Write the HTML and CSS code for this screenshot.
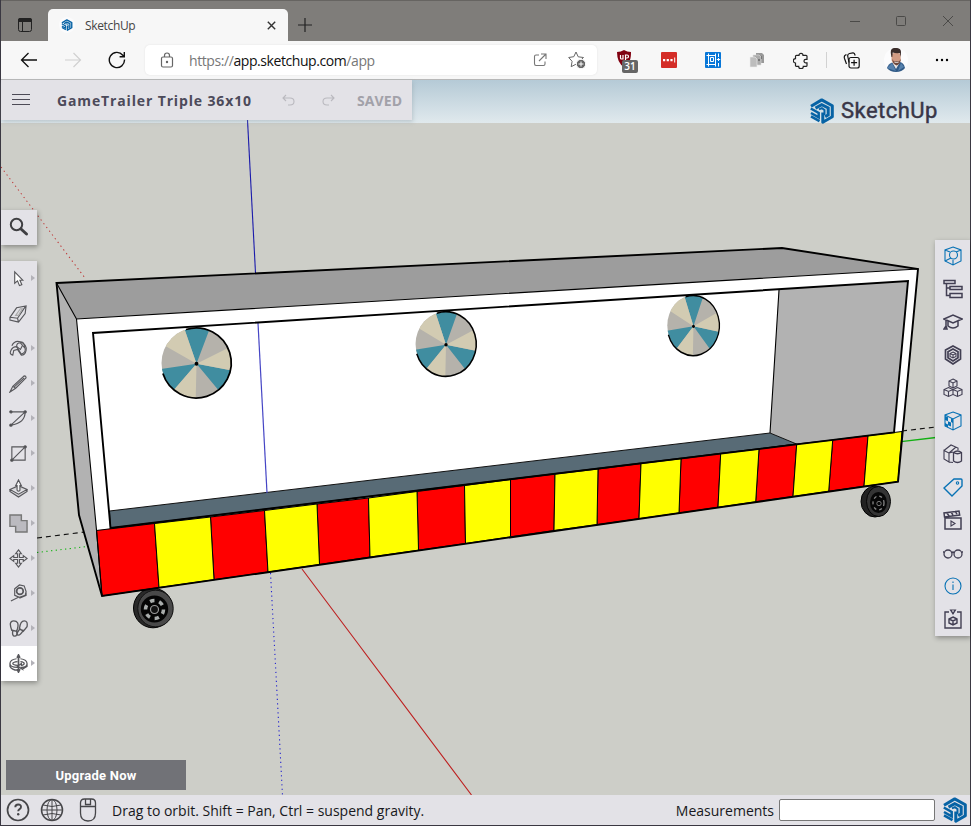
FILE: index.html
```html
<!DOCTYPE html>
<html lang="en">
<head>
<meta charset="utf-8">
<title>SketchUp</title>
<link rel="stylesheet" href="styles.css">
</head>
<body>
<svg width="0" height="0" class="defs">
  <defs>
    <symbol id="logo" viewBox="0 0 24 26">
      <g fill="none" stroke="#0763a5" stroke-width="3">
        <path d="M1 8.200 11.700 1.900 22.300 7.800V18.700L12.800 24.300V14.600" stroke-linejoin="round"/>
        <path d="M5.500 10.100 11.700 6.600 18.200 10V16.900L15.200 18.700" />
        <path d="M9 11.400 11.900 10.200 14.500 12V17" stroke-width="2"/>
        <path d="M.8 10.500 8.700 15V19.400L1 15M1 18.400 9.500 23.200" stroke-width="2.500"/>
      </g>
    </symbol>
    <clipPath id="disc"><circle r="1" cx="0" cy="-.025"/></clipPath>
    <symbol id="umbrella" viewBox="-1.1 -1.1 2.2 2.2" overflow="visible" preserveAspectRatio="none">
      <g clip-path="url(#disc)">
        <rect x="-1.1" y="-1.1" width="2.2" height="2.2" fill="#b5b2ab"/>
        <path fill="#408da0" d="M0 0-.45-1.3H.49ZM0 0 1.34.25.84 1.01ZM0 0-.9 1.04-1.4.21Z"/>
        <path fill="#d2cbb2" d="M0 0 1.19-.6 1.34.25ZM0 0-.03 1.33-.9 1.04ZM0 0-1.22-.7-.45-1.3Z"/>
      </g>
      <path d="M-.3-.98A1 1 0 1 1-.96.28" fill="none" stroke="#000" stroke-width=".05"/>
      <circle r=".055"/>
    </symbol>
  </defs>
</svg>
<div class="window">
  <header class="titlebar">
    <svg class="tabs-icon" width="16" height="16" viewBox="0 0 16 16"><rect x="1.500" y="1.500" width="13" height="13" rx="2" fill="none" stroke="#222"/><path d="M1 5V3q0-2 2-2h10q2 0 2 2v2z" fill="#222"/><path d="M5.500 5v9" stroke="#222"/></svg>
    <div class="tab">
      <svg width="16" height="16" viewBox="0 0 16 16"><circle cx="8" cy="8" r="8" fill="#fbfbfc"/><use href="#logo" x="2" y="2" width="12" height="12"/></svg>
      <span>SketchUp</span>
      <svg class="tab-close" width="9" height="9" viewBox="0 0 9 9"><path d="m.8.8 7.400 7.400m0-7.400L.8 8.200" stroke="#333" stroke-width="1.400"/></svg>
    </div>
    <svg class="new-tab" width="14" height="14" viewBox="0 0 14 14"><path d="M7 0v14M0 7h14" stroke="#222" stroke-width="1.200"/></svg>
    <div class="controls">
      <svg width="10" height="12" viewBox="0 0 10 12"><path d="M0 6.500h10" stroke="#4b4a48"/></svg>
      <svg width="12" height="12" viewBox="0 0 12 12"><rect x="1.500" y="1.500" width="9" height="9" rx="1" fill="none" stroke="#4b4a48"/></svg>
      <svg width="12" height="12" viewBox="0 0 12 12"><path d="m1 1 10 10M11 1 1 11" stroke="#4b4a48"/></svg>
    </div>
  </header>
  <div class="navbar">
    <svg class="back" width="18" height="16" viewBox="0 0 18 16" fill="none" stroke="#111" stroke-width="1.300"><path d="M17 8H1.500M8.500 1l-7 7 7 7"/></svg>
    <svg class="forward" width="18" height="16" viewBox="0 0 18 16" fill="none" stroke="#d0d0d0" stroke-width="1.200"><path d="M1 8h15.500M9.500 1l7 7-7 7"/></svg>
    <svg class="reload" width="18" height="18" viewBox="0 0 18 18" fill="none" stroke="#111" stroke-width="1.400"><path d="M16.500 8.500a7.600 7.600 0 1 1-1.700-4.300l1 1.200M16.300 1v4.700h-4.700"/></svg>
    <div class="address">
      <svg width="14" height="16" viewBox="0 0 14 16" fill="none" stroke="#666" stroke-width="1.200"><rect x="1.500" y="5" width="11" height="10" rx="1.500"/><path d="M4.500 5V3.500q0-2.500 2.500-2.500t2.500 2.500V5"/><circle cx="7" cy="10" r=".6" fill="#666"/></svg>
      <span class="url">https://<b>app.sketchup.com</b>/app</span>
      <svg class="open" width="14" height="14" viewBox="0 0 14 14" fill="none" stroke="#777" stroke-width="1.100"><path d="M6 2H3q-1.500 0-1.500 1.500v7Q1.500 12.500 3 12.500h7.500q1.500 0 1.500-1.500V8.500M8 1h5v5M13 1 6 8"/></svg>
      <svg class="star" width="18" height="18" viewBox="0 0 18 18"><path d="m8 1 2.200 4.800 5.300.7-3.900 3.700.2 5.600L8 13.200l-4.800 2.500.9-5.400L.7 6.500l5.100-.8z" fill="none" stroke="#666"/><circle cx="13" cy="13" r="4.700" fill="#666" stroke="#fff"/><path d="M13 10.500v5M10.500 13h5" stroke="#fff"/></svg>
    </div>
    <div class="extensions">
      <div class="shield"><svg width="14" height="17" viewBox="0 0 14 17"><path d="M7 0q3 2 7 2c0 7-1 11-7 15Q0 13 0 2q4 0 7-2" fill="#800010"/><path d="M3.500 5v3q0 1 1 1H6V5M8.500 10V5H10q1.500 0 1.500 1.500T10 8H8.500" fill="none" stroke="#fff" stroke-width="1.200"/></svg><span>31</span></div>
      <svg width="16" height="16" viewBox="0 0 16 16"><rect width="16" height="16" rx="1" fill="#d42d27"/><path d="M2 7h2.200v2.200H2zm3.700 0h2.200v2.200H5.700zm3.700 0h2.200v2.200H9.400zM13.200 5.500h1v5h-1z" fill="#fff"/></svg>
      <svg width="16" height="16" viewBox="0 0 16 16"><rect width="16" height="16" rx="1" fill="#0877d8"/><path d="M1.500 3.500h9M3.500 1.500v13M1.500 12.500h9M10.500 1.500v13M5.500 5.500h3v4h-3zM13.500 1.500V5m0 6v3.500m-1.700-7h3.400M13.500 6v3" fill="none" stroke="#fff"/></svg>
      <svg width="16" height="16" viewBox="0 0 16 16"><path d="M7 1h6l2 2v8H7z" fill="#999"/><path d="M4 3h6l2 2v8H4z" fill="#aaa" stroke="#ddd" stroke-width=".6"/><path d="M1 5h5l2 2v8H1z" fill="#bdbdbd" stroke="#eee" stroke-width=".6"/><path d="M9 7h2v2H9zM12 4h1v3h-1z" fill="#777"/></svg>
      <svg width="16" height="17" viewBox="0 0 16 17"><path d="M6 3.300a2 2 0 0 1 4 0h3q1 0 1 1v3h-1.200a1.800 1.800 0 0 0 0 3.600H14v2.500q0 1-1 1h-2.700a2.300 2.300 0 0 1-4.600 0H3.500q-1 0-1-1V11a2.200 2.200 0 0 1 0-4.400V4.300q0-1 1-1z" fill="none" stroke="#222" stroke-width="1.200"/></svg>
      <i class="divider"></i>
      <svg width="17" height="17" viewBox="0 0 17 17" fill="none" stroke="#111" stroke-width="1.200"><path d="m3.500 12-2-5.500Q.7 4 2.500 3l1-.4M6 10.500l-1.200-6Q4.300 2 6.500 1.500L10 .8q1.500-.2 2.200 2.700"/><rect x="6" y="5.500" width="10.200" height="10.500" rx="2"/><path d="M11.100 7.700v6M8.100 10.700h6"/></svg>
      <svg class="avatar" width="24" height="24" viewBox="0 0 24 24"><circle cx="12" cy="12" r="12" fill="#fcfcfd"/><path d="M3 20q1-4 6-6h7q4 1 5 6-3 4-9 4t-9-4" fill="#315a86"/><path d="m8 14 4 7 4-7z" fill="#ece7e4"/><path d="m3 20 5-5 4 8zM17 15l-3 8 6-4z" fill="#5681ad"/><path d="M7.500 6q4.500-3 9 0l.3 6q-.5 3-4.300 5-4-1-5-5z" fill="#d29b83"/><path d="M7.500 9Q5-.5 11 0q6-.5 6 4l-.3 5-1-4q-4 .5-7-.5L8.300 9z" fill="#3b2d2b"/><path d="M8.200 11 10 13.500q3-1.200 5 0L16.800 11q-.3 5-4.200 6.500-4-1.500-4.400-6.500" fill="#6d493e"/><path d="M10.500 14.300h4" stroke="#eee" stroke-width=".9"/></svg>
      <svg width="16" height="4" viewBox="0 0 16 4"><circle cx="3" cy="2" r="1.200"/><circle cx="8" cy="2" r="1.200"/><circle cx="13" cy="2" r="1.200"/></svg>
    </div>
  </div>

  <main class="viewport">
    <svg class="scene" width="969" height="715" viewBox="1 80 969 715">
      <g fill="none" stroke-width="1.100">
        <path d="M247.500 120 255.500 273" stroke="#1a1aab"/>
        <path d="M1 167 85 278" stroke="#bf3a3a" stroke-dasharray="1.300 3.400"/>
        <path d="M302 569 471.500 795" stroke="#bd1d1d"/>
        <path d="M270.500 573 282.500 795" stroke="#2222d0" stroke-dasharray="1.200 3.300"/>
        <path d="M37 538 97 530.500M902 431 936 427" stroke="#111" stroke-dasharray="5 4"/>
        <path d="M37 552.500 87 546.500" stroke="#16b416" stroke-dasharray="1.300 3.400"/>
        <path d="M901 441.700 936 437.500" stroke="#12b012" stroke-width="1.300"/>
      </g>
      <g>
        <ellipse cx="153" cy="608" rx="19.500" ry="19.800" fill="#292929" stroke="#000"/>
        <ellipse cx="155.500" cy="608.500" rx="17.700" ry="18.300" fill="#494949" stroke="#111"/>
        <ellipse cx="154.500" cy="609" rx="13.700" ry="13.500" fill="#050505"/>
        <circle cx="154.500" cy="609.500" r="9" fill="none" stroke="#a9adac" stroke-width="3.500" stroke-dasharray="4.500 4.900"/>
        <circle cx="154.500" cy="609.500" r="4" fill="#111" stroke="#999" stroke-width="1.200"/>
        <ellipse cx="875" cy="501.500" rx="14" ry="15.500" fill="#222" stroke="#000"/>
        <ellipse cx="878.500" cy="501.500" rx="12" ry="15" fill="#343434" stroke="#050505"/>
        <ellipse cx="878.500" cy="502.500" rx="8.500" ry="10.500" fill="#070707"/>
        <ellipse cx="878.500" cy="503" rx="5.500" ry="7" fill="none" stroke="#888" stroke-width="1.300" stroke-dasharray="3 3"/>
        <circle cx="879" cy="503.500" r="2.200" fill="none" stroke="#777"/>
      </g>
      <path d="M56.500 283 782 248 918 269 76.500 319z" fill="#9d9d9d"/>
      <path d="M56.500 283 76.500 319 96.500 530 102 596 79 515z" fill="#b2b2b2"/>
      <path d="M76.500 319 918 269 902 432 96.500 530z" fill="#fff"/>
      <path d="M779 289.500 908 281 894 433 796.500 444 770 433z" fill="#b2b2b2"/>
      <path d="M109.500 511 770 433 796.500 444 110.500 528z" fill="#586b76" stroke="#111"/>
      <path d="M258 323 267 493" stroke="#4545c5" stroke-width="1.200"/>
      <g stroke="#000" stroke-width="1">
        <g fill="red">
          <path d="M96.500 530.500 154.500 523.500 159 587.500 102 596z"/><path d="M210.500 517 264.500 510.500 268 572 214 579.700z"/><path d="M317 504 368.500 498 370 557 319.500 564.500z"/><path d="M417 491.500 464.500 485.500 465.500 543.500 418.500 550.200z"/><path d="M510.500 479.500 555 474 554 530.500 510.500 536.800z"/><path d="M598 469 641 463.500 639 518.700 597 524.700z"/><path d="M681 458.700 720.700 453.500 718 507.300 679 513z"/><path d="M759 449 796.700 444 793 496.500 755.700 501.800z"/><path d="M832.700 440 868 435.700 864 486.300 828.700 491.300z"/>
        </g>
        <g fill="#ff0">
          <path d="M154.500 523.500 210.500 517 214 579.700 159 587.500z"/><path d="M264.500 510.500 317 504 319.500 564.500 268 572z"/><path d="M368.500 498 417 491.500 418.500 550.200 370 557z"/><path d="M464.500 485.500 510.500 479.500 510.500 536.800 465.500 543.500z"/><path d="M555 474 598 469 597 524.700 554 530.500z"/><path d="M641 463.500 681 458.700 679 513 639 518.700z"/><path d="M720.700 453.500 759 449 755.700 501.800 718 507.300z"/><path d="M796.700 444 832.700 440 828.700 491.300 793 496.500z"/><path d="M868 435.700 902 431.500 898 481.700 864 486.300z"/>
        </g>
      </g>
      <g fill="none" stroke="#000">
        <path d="M56.500 283 76.500 319 918 269M76.500 319 96.500 530 102 596M779 290 770 433" stroke-width="1.100"/>
        <path d="M56.500 283 782 248 918 269 898 481.700 102 596 79 515zM110.500 528 93 333 908 281 894 432.500z" stroke-width="1.900"/>
      </g>
      <use href="#umbrella" x="158" y="325.300" width="77" height="77"/>
      <use href="#umbrella" x="412.500" y="309.300" width="67" height="71"/>
      <use href="#umbrella" x="664.700" y="293.300" width="57.500" height="66"/>
    </svg>

    <div class="docbar">
      <svg width="18" height="12" viewBox="0 0 18 12"><path d="M0 .5h18M0 5.500h18M0 10.500h18" stroke="#4c4a56"/></svg>
      <strong class="doc-name">GameTrailer Triple 36x10</strong>
      <svg class="undo" width="13" height="13" viewBox="0 0 13 13"><path d="M4 1 1 4l3 3M1 4h7q4 0 4 3.500T8 11H6" fill="none" stroke="#bab9bf" stroke-width="1.100"/></svg>
      <svg class="redo" width="13" height="13" viewBox="0 0 13 13"><path d="m9 1 3 3-3 3M12 4H5Q1 4 1 7.500T5 11h2" fill="none" stroke="#bab9bf" stroke-width="1.100"/></svg>
      <strong class="saved">SAVED</strong>
    </div>
    <div class="brand"><svg width="24" height="26"><use href="#logo"/></svg><span>SketchUp</span></div>

    <div class="panel search"><svg width="20" height="20" viewBox="0 0 20 20" fill="none" stroke="#3f3f42"><circle cx="7.500" cy="7.500" r="5.700" stroke-width="2"/><path d="m12 12 5.500 5" stroke-width="3" stroke-linecap="round"/></svg></div>
    <div class="panel tools">
      <div class="tool more"><svg viewBox="0 0 20 20"><path d="M6 3v12l3-2.500 2 5 2.500-1-2-4.700h3z" fill="#fff"/></svg></div>
      <div class="tool"><svg viewBox="0 0 20 20"><path d="m1 14 7-10 10-2-1 8-7 9-9-2zM1 14l8 1 8-12M9 15l1 4"/><path d="m7 12 5-7h2l-4 7z" stroke="#aaa"/></svg></div>
      <div class="tool more"><svg viewBox="0 0 20 20"><path d="M3 7q3-6 9-4 7 3 6 9-1 5-5 5l-4-6-4 1-1 5q-4-1-2-5 2-4 6-4l4 3 2-4"/><path d="m8 8 5 8q5-2 4-6L12 4q-4 0-4 4M12 4q3-3 5 5" /></svg></div>
      <div class="tool more"><svg viewBox="0 0 20 20"><path d="m1 19 3-6L16 2q2 0 2 2L7 15zM4 13l3 2M5 14 16 4"/></svg></div>
      <div class="tool more"><svg viewBox="0 0 20 20"><path d="M2 3h15q0 12-15 14M2 17 17 3"/><circle cx="2" cy="3" r="1.200" fill="#444"/><circle cx="17" cy="3" r="1.200" fill="#444"/><circle cx="2" cy="17" r="1.200" fill="#444"/></svg></div>
      <div class="tool more"><svg viewBox="0 0 20 20"><path d="M3 3h14v14H3zM3 17 17 3"/><circle cx="3" cy="17" r="1.200" fill="#444"/><circle cx="17" cy="3" r="1.200" fill="#444"/></svg></div>
      <div class="tool more"><svg viewBox="0 0 20 20"><path d="m1 11 9-4 9 4-9 5zM1 11v2l9 6 9-6v-2" fill="#d2d1d5"/><path d="M8.500 12V7H7l3-6 3 6h-1.500v5q-1.500 1.500-3 0" fill="#f4f4f5"/></svg></div>
      <div class="tool more"><svg viewBox="0 0 20 20"><path d="M1 1h12v6h6v12H7v-6H1z" fill="#bbbac0" stroke="#777" stroke-width="1.500"/></svg></div>
      <div class="tool more"><svg viewBox="0 0 20 20"><path d="m10 1 3 4h-2v4h4V7l4 3-4 3v-2h-4v4h2l-3 4-3-4h2v-4H5v2l-4-3 4-3v2h4V5H7z"/></svg></div>
      <div class="tool more"><svg viewBox="0 0 20 20"><path d="m6 5 5-4 5 1 2 6-1 4-6 2-5-2zM7 12l3 2-8 4M18 9v3l-7 3"/><circle cx="11.500" cy="7.500" r="3.500" stroke-width="1.800"/></svg></div>
      <div class="tool more"><svg viewBox="0 0 20 20"><path d="M3 12Q-1 2 5 2t4 8l-1 3zm1 0q-1 6 2 6t2-5zM11 10q1-8 5-8t3 6l-4 5zm0 1-2 3q-1 3 1 3t5-5z" stroke-width="1.400"/></svg></div>
      <div class="tool more active"><svg viewBox="0 0 20 20"><path d="M8 5Q1 6 1 10t8 4v-2q-5-.5-5-2t5-2M12 5q7 1 7 5t-6 4l1 2-5-3 4-3v2q3-.5 3-2t-4-2M1 10v3q2 4 8 4M19 10v3l-5 3" stroke-width="1.300"/><path d="M10 1v18M8.500 4 10 1l1.500 3M8.500 16l1.500 3 1.500-3" stroke-width="1.800"/></svg></div>
    </div>
    <div class="panel side">
      <svg class="blue" viewBox="0 0 20 20"><path d="m10 1 8 3v11l-8 4-8-4V4zM2 4l5 2M13 6l5-2M10 14v5"/><circle cx="10.500" cy="9" r="4"/><path d="m8 12-6 3"/></svg>
      <svg viewBox="0 0 20 20"><path d="M1 1.500h11v3H1zM7 7.500h12v3H7zM7 14.500h12v4H7zM3.500 5v11.500H7M3.500 9H7" stroke-width="1.500"/></svg>
      <svg viewBox="0 0 20 20"><path d="m1 7 9-4 9 4-9 4zM5 9v5q5 4 10 0V9M3 8v7m-2 2 2-3 1 3z" stroke-width="1.500"/></svg>
      <svg viewBox="0 0 20 20"><path d="m10 1 7.500 4v9L10 19l-7.500-5V5zM10 4l5 2.700v6L10 16l-5-3.300v-6z" stroke-width="1.700"/><path d="m10 7 3 1.500v3L10 13l-3-1.500v-3zm-3 1.500 3 1.500 3-1.500M10 10v3"/></svg>
      <svg viewBox="0 0 20 20"><path d="m10 1 4 2v5l-4 2-4-2V3zM6 3l4 2 4-2M10 5v5M5.500 9.500l4.500 2v5l-4.500 2-4.500-2v-5zM1 11.500l4.500 2 4.500-2M5.500 13.500v5M14.500 9.500l4.500 2v5l-4.500 2-4.500-2v-5l4.500-2M10 11.500l4.500 2 4.500-2M14.500 13.500v5"/></svg>
      <svg class="blue" viewBox="0 0 20 20"><path d="m10 1 8 3v11l-8 4-8-4V4zM2 4l8 4 8-4M10 8v11"/><path d="m2 5 3 1.300v4L2 9zm3 5.300 3 1.300v4l-3-1.400zM8 7l2 1v4l-2-1zM2 12l3 1.500v3L2 15z" fill="#0872b5" stroke="none"/></svg>
      <svg viewBox="0 0 20 20"><path d="M1 6.500 8 1l7 3v2M1 6.500 6 9v9l-5-3zM6 9l7-6M6 18l4 .5M6 9l4-1"/><path d="M10.500 8.500V17q4 3 8 0V8.500q-4-3-8 0 4 2.500 8 0" stroke-width="1.300"/></svg>
      <svg class="blue" viewBox="0 0 20 20"><path d="M11 2h7q1 0 1 1v6L9 19l-8-8z" stroke-width="1.400"/><circle cx="14.500" cy="6" r="1.200"/></svg>
      <svg viewBox="0 0 20 20"><path d="M2 8h16v11H2zM1.500 7 1 3l15-2 .7 4zM4 3l2 3m2-4 2 3m2-4 2 3" stroke-width="1.500"/><path d="m8 11 4 2.500L8 16z"/></svg>
      <svg viewBox="0 0 20 20"><circle cx="5" cy="11" r="4" stroke-width="1.300"/><circle cx="15" cy="11" r="4" stroke-width="1.300"/><path d="M0 9h1m18 0h1M9 10q1-2 2 0" stroke-width="1.300"/></svg>
      <svg class="blue" viewBox="0 0 20 20"><circle cx="10" cy="10" r="8"/><path d="M10 8.500V14M10 5.500V7"/></svg>
      <svg viewBox="0 0 20 20"><path d="M6 3H2v16h16V3h-4M10 8l4 2v4l-4 2-4-2v-4zm-4 2 4 2 4-2M10 12v4" stroke-width="1.400"/><path d="M7.500 1h5L10 5z" fill="#423f53"/><path d="M10 1v2" stroke="#eee"/></svg>
    </div>
    <button class="upgrade">Upgrade Now</button>
  </main>

  <footer class="status">
    <svg width="24" height="24" viewBox="0 0 24 24"><circle cx="12" cy="12" r="10.500" fill="none" stroke="#464649" stroke-width="1.700"/><path d="M9.300 9.200q0-2.700 2.900-2.700t2.800 2.500q0 1.400-1.700 2.300-1.100.6-1.100 2" fill="none" stroke="#464649" stroke-width="1.900"/><circle cx="12.200" cy="16.300" r="1.200" fill="#464649"/></svg>
    <svg class="globe" width="24" height="24" viewBox="0 0 24 24" fill="none" stroke="#464649"><circle cx="12" cy="12" r="10.500" stroke-width="1.500"/><ellipse cx="12" cy="12" rx="5" ry="10.500"/><path d="M12 1v22M1 12h22M3 7q9 3 18 0M3 17q9-3 18 0"/></svg>
    <svg class="mouse" width="18" height="24" viewBox="0 0 18 24" fill="none" stroke="#464649" stroke-width="1.300"><path d="M1.500 5q0-4 4-4h7q4 0 4 4v10q0 8-7.500 8t-7.500-8zM1 8.500h16M6.500 1v5.500h5V1"/></svg>
    <span class="hint">Drag to orbit. Shift = Pan, Ctrl = suspend gravity.</span>
    <label class="measure"><span>Measurements</span><input type="text"></label>
    <svg class="status-logo" width="24" height="26"><use href="#logo"/></svg>
  </footer>
</div>
</body>
</html>
```
FILE: styles.css
```css
* { box-sizing: border-box; }
body { margin: 0; font-family: "Open Sans", "Noto Sans", sans-serif; overflow: hidden; }
svg { display: block; flex: none; }
.defs { position: absolute; }
.window { width: 971px; height: 826px; display: flex; flex-direction: column; border: 1px solid #3a3842; border-top: 0; background: #cdcec8; }

.titlebar { height: 41px; flex: none; display: flex; align-items: center; background: #7f7d7a; border-top: 1px solid #666461; padding-top: 8px; }
.tabs-icon { margin-left: 16px; }
.tab { align-self: stretch; width: 240px; margin-left: 15px; padding: 0 12px 0 11px; display: flex; align-items: center; background: #f7f7f7; border-radius: 5px 5px 0 0; font-size: 12px; color: #444; }
.tab span { margin-left: 10px; letter-spacing: -.35px; }
.tab-close { margin-left: auto; }
.new-tab { margin-left: 10px; }
.controls { margin: -8px 16px 0 auto; display: flex; align-items: center; gap: 35px; }

.navbar { height: 39px; flex: none; display: flex; align-items: center; background: #f7f7f7; border-bottom: 1px solid #b8b8b8; }
.back { margin-left: 19px; }
.forward { margin-left: 26px; }
.reload { margin-left: 26px; }
.address { width: 452px; height: 30px; margin-left: 19px; display: flex; align-items: center; background: #fff; border-radius: 5px; padding: 0 11px 0 15px; box-shadow: 0 0 2px #e0e0e0; }
.url { margin-left: 15px; font-size: 14px; color: #777; letter-spacing: -.42px; }
.url b { font-weight: 400; color: #111; }
.open { margin-left: auto; }
.star { margin-left: 21px; }
.extensions { flex: 1; display: grid; grid-template-columns: repeat(5, 44px) 6px 44px 46px 46px; align-items: center; justify-items: center; padding-left: 6px; }
.shield { position: relative; width: 22px; height: 20px; margin-left: 6px; }
.shield span { position: absolute; left: 5px; top: 10px; width: 16px; height: 13px; border-radius: 2px; background: #666; color: #fff; font: 600 10px/13px "Open Sans", sans-serif; text-align: center; }
.divider { width: 1px; height: 16px; background: #d2d2d2; }

.viewport { position: relative; height: 715px; flex: none; background: linear-gradient(#b5cad6, #e0e9ed 43px, #cdcec8 43px); }
.docbar { position: absolute; left: 0; top: 0; width: 411px; height: 40px; display: flex; align-items: center; padding-left: 11px; background: #e3e2e7; color: #4c4a5a; box-shadow: 1px 2px 4px #8999a066; font-size: 14px; }
.doc-name { margin-left: 27px; letter-spacing: .86px; white-space: nowrap; width: 195px; }
.undo { margin-left: 30px; }
.redo { margin-left: 27px; }
.saved { margin-left: 22px; color: #a2a1a9; font-weight: 700; letter-spacing: .1px; }
.brand { position: absolute; left: 809px; top: 17px; display: flex; align-items: center; gap: 7px; color: #383647; font: 400 22px/28px Roboto, sans-serif; letter-spacing: .45px; -webkit-text-stroke: .45px #383647; }

.panel { position: absolute; background: #e3e2e7; box-shadow: 1px 2px 5px #0005; }
.search { left: 0; top: 130px; width: 36px; height: 35px; padding: 7px 8px; }
.tools { left: 0; top: 181px; width: 36px; height: 420px; display: grid; grid-template-rows: repeat(12, 35px); }
.tool { display: flex; align-items: center; padding-left: 8px; }
.tool svg { width: 19px; height: 19px; fill: none; stroke: #57575b; stroke-width: 1.2; }
.more::after { content: ""; margin-left: 3px; border: 3px solid transparent; border-left: 4px solid #b3b2b8; border-right: 0; margin-bottom: 2px; }
.active { background: #fff; }
.side { left: 934px; top: 160px; width: 35px; height: 396px; display: grid; grid-template-rows: repeat(12, 33px); align-items: center; justify-items: center; }
.side svg { width: 20px; height: 20px; margin-bottom: 2px; fill: none; stroke: #423f53; stroke-width: 1.1; }
.side .blue { stroke: #0872b5; }
.upgrade { position: absolute; left: 5px; top: 680px; width: 180px; height: 30px; border: 0; padding: 0; background: #717277; color: #fff; font: 700 13px Roboto, sans-serif; letter-spacing: .25px; }

.status { height: 30px; flex: none; display: flex; align-items: center; background: #e3e2e7; padding-left: 5px; font-size: 14px; color: #171820; }
.globe { margin-left: 10px; }
.mouse { margin-left: 15px; }
.hint { margin-left: 15px; white-space: nowrap; }
.measure { margin-left: auto; display: flex; align-items: center; gap: 5px; }
.measure input { width: 156px; height: 22px; border: 1px solid #777; border-radius: 2px; background: #fff; padding: 0; }
.status-logo { margin: 0 3px 0 8px; }
```
